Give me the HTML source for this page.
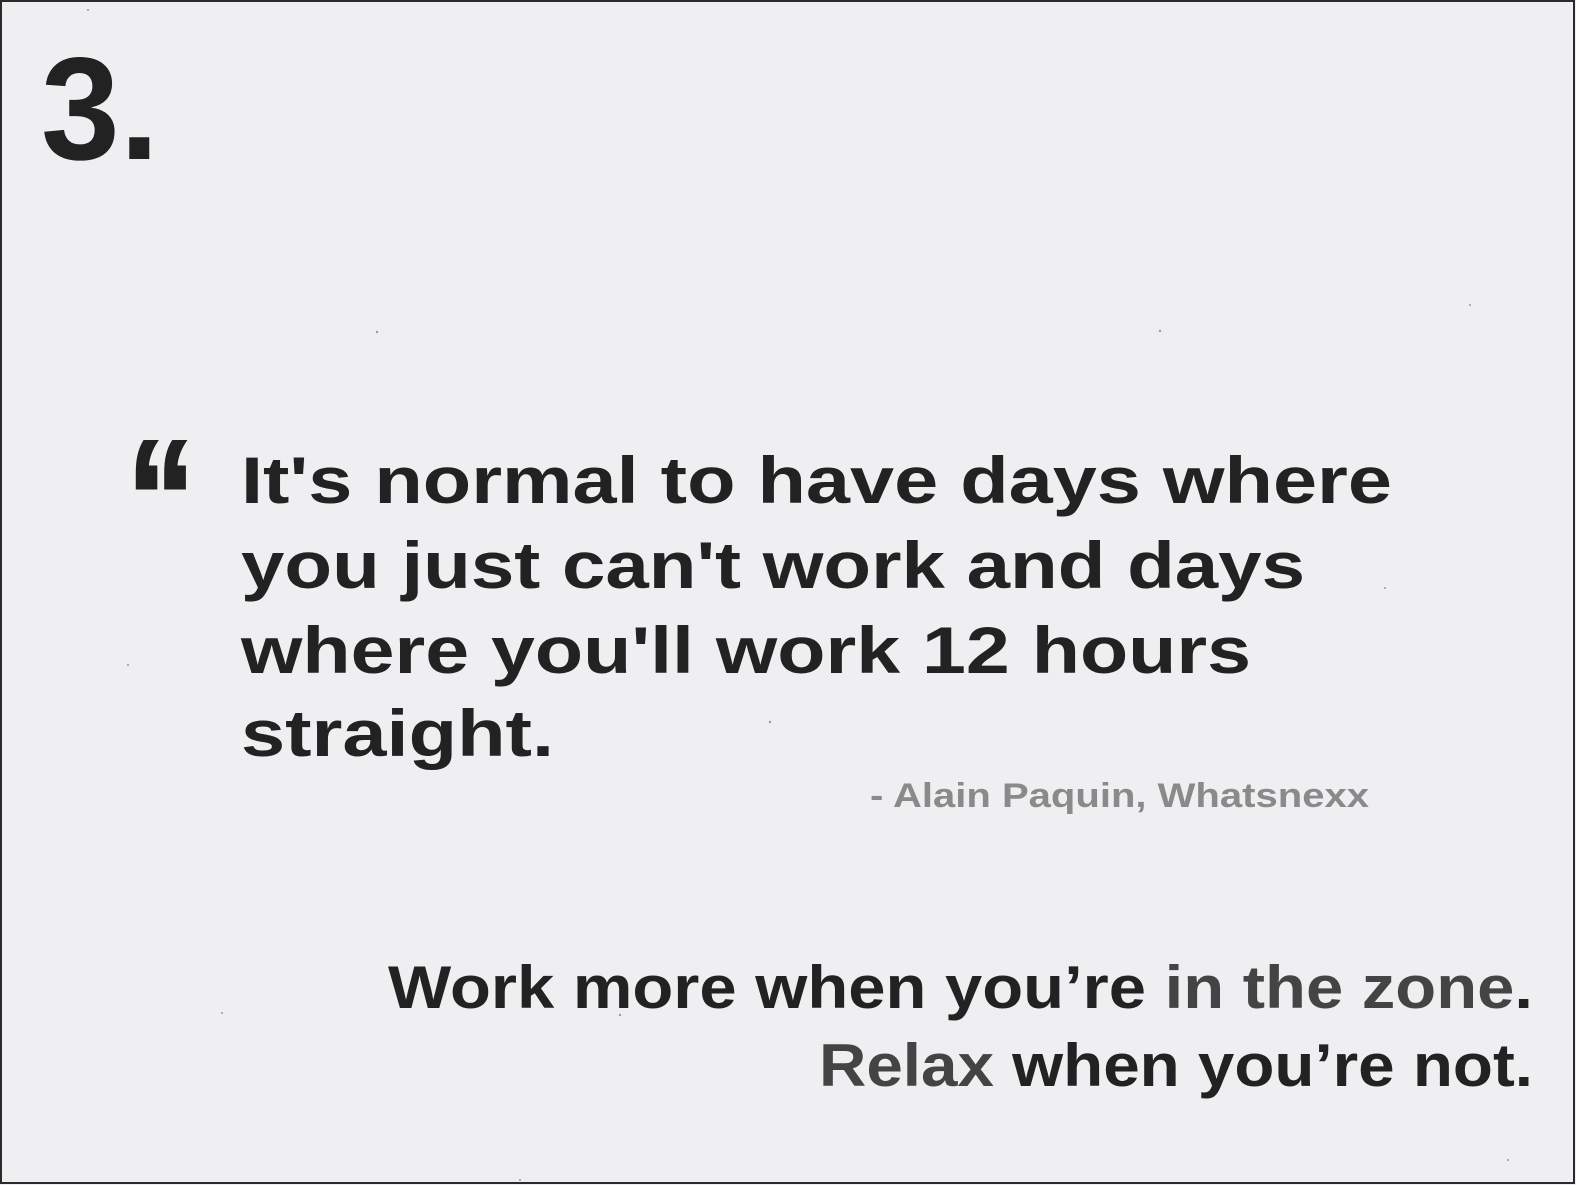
<!DOCTYPE html>
<html><head><meta charset="utf-8"><style>
html,body{margin:0;padding:0;}
body{width:1576px;height:1185px;overflow:hidden;background:#efeff1;}
svg{display:block;}
text{font-family:"Liberation Sans",sans-serif;font-weight:bold;}
</style></head><body>
<svg width="1576" height="1185" viewBox="0 0 1576 1185">
<rect x="0" y="0" width="1576" height="1185" fill="#efeff1"/>
<rect x="1" y="1" width="1573" height="1182" fill="none" stroke="#2a2a2a" stroke-width="2"/>
<g fill="#9a9a9a">
<circle cx="88" cy="10" r="1"/><circle cx="377" cy="332" r="1.2"/><circle cx="1160" cy="331" r="1.2"/><circle cx="770" cy="722" r="1.2"/><circle cx="1385" cy="588" r="1"/><circle cx="620" cy="1015" r="1.2"/><circle cx="222" cy="1013" r="1"/><circle cx="1508" cy="1160" r="1"/><circle cx="1470" cy="305" r="1"/><circle cx="128" cy="665" r="1"/><circle cx="520" cy="1180" r="1"/><circle cx="640" cy="1000" r="1"/>
</g>
<text x="41" y="159" font-size="146" fill="#222" textLength="118" lengthAdjust="spacingAndGlyphs">3.</text>
<text x="127" y="555" font-size="165" fill="#222" stroke="#222" stroke-width="3" textLength="68" lengthAdjust="spacingAndGlyphs" font-family="Liberation Serif">“</text>
<g font-size="66" fill="#222">
<text x="241" y="503" textLength="1151" lengthAdjust="spacingAndGlyphs">It's normal to have days where</text>
<text x="241" y="588" textLength="1064" lengthAdjust="spacingAndGlyphs">you just can't work and days</text>
<text x="241" y="673" textLength="1010" lengthAdjust="spacingAndGlyphs">where you'll work 12 hours</text>
<text x="241" y="756" textLength="313" lengthAdjust="spacingAndGlyphs">straight.</text>
</g>
<text x="870" y="807" font-size="34" fill="#8a8a8a" textLength="499" lengthAdjust="spacingAndGlyphs">- Alain Paquin, Whatsnexx</text>
<g font-size="60">
<text x="388" y="1008" fill="#222" textLength="1145" lengthAdjust="spacingAndGlyphs">Work more when you’re <tspan fill="#444">in the zone</tspan>.</text>
<text x="819" y="1086" fill="#222" textLength="714" lengthAdjust="spacingAndGlyphs"><tspan fill="#444">Relax</tspan> when you’re not.</text>
</g>
</svg>
</body></html>
